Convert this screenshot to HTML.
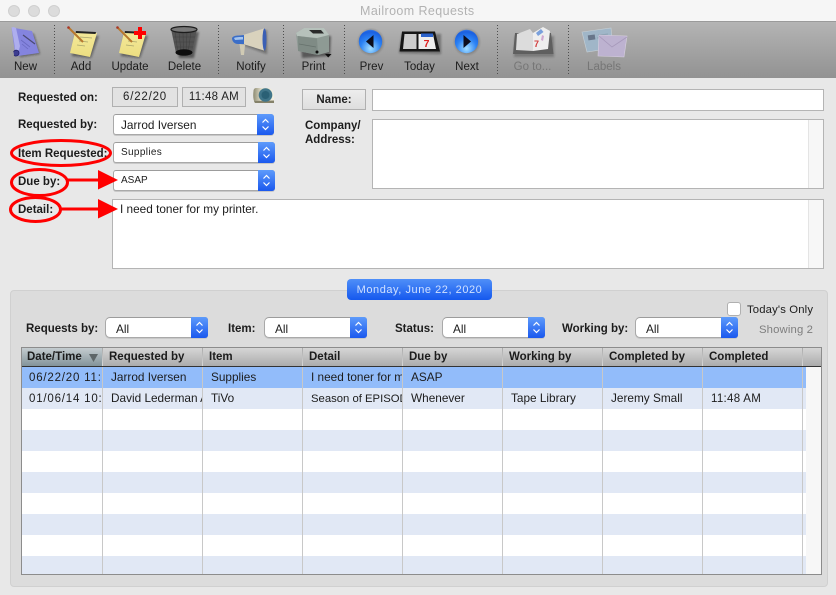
<!DOCTYPE html>
<html><head><meta charset="utf-8"><title>Mailroom Requests</title>
<style>
html,body{margin:0;padding:0}
body{width:836px;height:595px;overflow:hidden;position:relative;background:#e8e8e8;font-family:"Liberation Sans",Arial,sans-serif;font-size:11.8px;color:#1c1c1c}
div,span{position:absolute;box-sizing:border-box}
.t{white-space:nowrap;line-height:14px}
.b{font-weight:bold;font-size:11.5px}
.tl{transform:translateX(-50%);top:60px;font-size:11.5px}
.sel{background:#fff;border:1px solid #a9a9a9;border-top-color:#9c9c9c;border-radius:3px;height:21px;box-shadow:0 1px 0 #c8c8c8}
.sel i{position:absolute;top:-1px;right:-1px;bottom:-1px;width:17px;background:linear-gradient(#5e9bfb,#1a58ee);border-radius:0 3px 3px 0}
.sel svg{position:absolute;top:3px;left:4px}
.sel b{position:absolute;left:7px;top:3px;font-weight:normal;line-height:14px;white-space:nowrap}
.f b{left:10px;top:4px}
.box{background:#e2e2e2;border:1px solid #b0b0b0;text-align:center;line-height:19px;color:#222;font-size:11.5px}
.fld{background:#fff;border:1px solid #b4b4b4}
.sb{position:absolute;top:0;bottom:0;right:0;width:15px;background:#f7f7f7;border-left:1px solid #e4e4e4}
.h{position:absolute;top:348px;height:20px;font-weight:bold;font-size:11.5px;line-height:18px;white-space:nowrap}
.r{position:absolute;line-height:21px;white-space:nowrap;overflow:hidden;height:20px}
.d{font-size:11.5px;letter-spacing:.8px}
.v{position:absolute;width:1px;top:367px;height:207px;background:#c8c8c8}
.vh{position:absolute;width:1px;top:348px;height:18px;background:linear-gradient(#aaa,#d8d8d8)}
.stripe{position:absolute;left:22px;width:784px;height:21px;background:#e1e8f5}
</style></head><body>

<!-- title bar -->
<div style="left:0;top:0;width:836px;height:21px;background:#f6f6f6"></div>
<div style="left:8px;top:5px;width:12px;height:12px;border-radius:50%;background:#dcdcdc;border:1px solid #d0d0d0"></div>
<div style="left:28px;top:5px;width:12px;height:12px;border-radius:50%;background:#dcdcdc;border:1px solid #d0d0d0"></div>
<div style="left:48px;top:5px;width:12px;height:12px;border-radius:50%;background:#dcdcdc;border:1px solid #d0d0d0"></div>
<div class="t" style="left:360px;top:4px;font-size:12.5px;color:#b2b2b2;letter-spacing:.4px">Mailroom Requests</div>

<!-- toolbar -->
<div style="left:0;top:21px;width:836px;height:57px;background:linear-gradient(#b4b4b4,#929292);border-top:1px solid #9a9a9a"></div>

<svg width="836" height="595" style="position:absolute;left:0;top:0" xmlns="http://www.w3.org/2000/svg">
<defs>
<radialGradient id="bl" cx=".5" cy=".8" r=".85"><stop offset="0" stop-color="#a6e0ff"/><stop offset=".5" stop-color="#2d84f5"/><stop offset=".85" stop-color="#1a5fe0"/><stop offset="1" stop-color="#4a8ff0"/></radialGradient>
<linearGradient id="pad" x1="0" y1="0" x2="0" y2="1"><stop offset="0" stop-color="#f4e999"/><stop offset="1" stop-color="#ebdd80"/></linearGradient>
<linearGradient id="cam" x1="0" y1="0" x2="1" y2="0"><stop offset="0" stop-color="#8c8a72"/><stop offset=".4" stop-color="#e4e0cc"/><stop offset="1" stop-color="#f2eee0"/></linearGradient>
<filter id="s" x="-20%" y="-20%" width="150%" height="150%"><feGaussianBlur stdDeviation=".35"/></filter>
<filter id="sh" x="-30%" y="-30%" width="170%" height="170%"><feGaussianBlur stdDeviation="1.1"/></filter>
</defs>

<!-- separators -->
<g stroke="#4e4e4e" stroke-width="1" stroke-dasharray="1 2" fill="none">
<path d="M54.500 25V74M218.500 25V74M283.500 25V74M344.500 25V74M497.500 25V74M568.500 25V74"/>
</g>

<g filter="url(#s)">
<!-- New: book -->
<path d="M15 30 L34 34 L40 54 L20 57 Z" fill="#222" opacity=".5" filter="url(#sh)"/>
<path d="M11.500 27.500 L32 31 L39 53 L18 56 L15 53 Z" fill="#8484de"/>
<path d="M11.500 27.500 C13 27 14 27 16 28 L20 46 L19 50 L15 53 C15 44 13 36 11.500 27.500Z" fill="#aeaeee"/>
<path d="M13.500 52 C15 49 19 50 19 53 C19 56 15 57 14 55" fill="#3c3c90" stroke="#24246a" stroke-width=".8"/>
<path d="M23 35 L35 44" stroke="#4a4a70" stroke-width="1.200"/>
<path d="M21 40 L30 47M22 44 L28 49" stroke="#6a6ac0" stroke-width=".8"/>

<!-- Add pad -->
<path d="M75 35 L99 36 L91 58 L72 56Z" fill="#222" opacity=".5" filter="url(#sh)"/>
<path d="M75 32 L97 33 L90 57 L70 53Z" fill="url(#pad)"/>
<path d="M76 31 L96 32 L95.500 34 L75.500 33Z" fill="#222"/>
<path d="M80 37 L92 38M79 41 L88 42M77 45 L85 46" stroke="#a9a56e" stroke-width=".8"/>
<path d="M69 28 L83 42" stroke="#b8782e" stroke-width="2"/><circle cx="68.500" cy="27.500" r="1.300" fill="#a83628"/>

<!-- Update pad -->
<path d="M124 35 L148 36 L140 58 L121 56Z" fill="#222" opacity=".5" filter="url(#sh)"/>
<path d="M124 32 L146 33 L139 57 L119 53Z" fill="url(#pad)"/>
<path d="M125 31 L145 32 L144.500 34 L124.500 33Z" fill="#222"/>
<path d="M128 41 L137 42M126 45 L134 46" stroke="#a9a56e" stroke-width=".8"/>
<path d="M118 28 L132 42" stroke="#b8782e" stroke-width="2"/><circle cx="117.500" cy="27.500" r="1.300" fill="#a83628"/>
<path d="M138 27H142V31H146V35H142V39H138V35H134V31H138Z" fill="#f00"/>

<!-- Trash -->
<path d="M174 32 L199 32 L194 58 L179 58Z" fill="#111" opacity=".45" filter="url(#sh)"/>
<path d="M171 29 L197 29 L192 53 L176 53Z" fill="#525252"/>
<g stroke="#3c3c3c" stroke-width=".4"><path d="M175 32 L178 53M179 32 L181 53M183 32 L183.500 53M187 32 L186 53M191 32 L188 53"/><path d="M173 37H195M174 42H194M175 47H193"/></g>
<ellipse cx="184" cy="29.500" rx="13" ry="3" fill="#787878" stroke="#1c1c1c" stroke-width="1.200"/>
<ellipse cx="184" cy="52.500" rx="8.500" ry="3.200" fill="#0c0c0c"/>

<!-- Notify megaphone -->
<path d="M245 38 L267 30 L267 54 L245 46Z" fill="#222" opacity=".4" filter="url(#sh)"/>
<path d="M243 35 L264 28.500 L264 50.500 L243 44Z" fill="#d9d2bd"/>
<ellipse cx="264.500" cy="39.500" rx="2" ry="11" fill="#3a5fb4"/>
<path d="M232 38 C233 36 236 35.500 239 35.500 L244 35 L244 44 L238 44 C234 44 232 41 232 38Z" fill="#3b6ec8"/>
<path d="M234 38 C236 37 240 37 243 37 L243 39.500 L235 40Z" fill="#a4c4ee"/>
<path d="M239.500 44 L245 45 L244 55 L241 55Z" fill="#d0cab4"/>

<!-- Print -->
<path d="M300 34 L331 36 L330 56 L302 58Z" fill="#111" opacity=".45" filter="url(#sh)"/>
<path d="M296 33 L304 28 L324 28 L329 36 L329 52 L318 55 L298 51Z" fill="#8e9a94"/>
<path d="M296 33 L304 28 L324 28 L329 35 L317 38 L297 36Z" fill="#b6c1bb"/>
<path d="M309 30 L321 30 L324 33.500 L313 33.500Z" fill="#2a2a2a"/>
<path d="M298 36 L317 38.500 L318 55 L298 51Z" fill="#7f8b85"/>
<path d="M299 44 L316 47" stroke="#66716c" stroke-width=".8"/>
<circle cx="317" cy="52" r="1.500" fill="#111"/>
<path d="M325 54 H331.500 L328.200 57.500Z" fill="#111"/>

<!-- Prev -->
<circle cx="371" cy="42" r="12.500" fill="#333" opacity=".3" filter="url(#sh)"/>
<circle cx="370.500" cy="41.500" r="11.700" fill="url(#bl)"/>
<path d="M373.500 35 V48 L366 41.500Z" fill="#08101e"/>
<!-- Next -->
<circle cx="467" cy="42" r="12.500" fill="#333" opacity=".3" filter="url(#sh)"/>
<circle cx="466.500" cy="41.500" r="11.700" fill="url(#bl)"/>
<path d="M463.500 35 V48 L471 41.500Z" fill="#08101e"/>

<!-- Today -->
<path d="M402 34 L441 34 L441 54 L399 53Z" fill="#222" opacity=".4" filter="url(#sh)"/>
<path d="M402 31.500 L435 31.500 L440 51.500 L399.500 51.500Z" fill="#151515"/>
<path d="M404.500 34 H416.500 V49 H403Z" fill="#cdcdcd"/>
<path d="M418.500 34 H433 L436 49 H418.500Z" fill="#efefef"/>
<rect x="421" y="33.500" width="12" height="3.500" fill="#2a62cc"/>
<text x="426.500" y="47" font-family="Liberation Sans" font-size="10.500" font-weight="bold" fill="#e02020" text-anchor="middle">7</text>

<!-- Go to -->
<path d="M515 36 L554 36 L554 57 L514 57Z" fill="#333" opacity=".35" filter="url(#sh)"/>
<path d="M515 33 L551 33 L553.500 54 L513 54Z" fill="#5e5e5e"/>
<path d="M517 34 L530 29 L533 33 L533 51 L516 50Z" fill="#dcdcdc"/>
<path d="M533 33 L543 27 L550 31 L548 49 L533 51Z" fill="#eeeeee"/>
<path d="M536 33 L541 29 L543.500 32 L538 36Z" fill="#7aa0dc"/>
<path d="M542 35 L544 36 L543 41 L541 40Z" fill="#d0a8d0"/>
<text x="536.500" y="47" font-family="Liberation Sans" font-size="9" font-weight="bold" fill="#d23c3c" text-anchor="middle">7</text>

<!-- Labels -->
<path d="M582 32 L611 28 L613 48 L587 52Z" fill="#a0b6c8" stroke="#c6d0d6" stroke-width=".6"/>
<rect x="588" y="35" width="7" height="5" fill="#68768a" transform="rotate(-8 591 37)"/>
<path d="M598 35 L608 34M597 38 L609 37" stroke="#869cac" stroke-width=".8"/>
<path d="M599 35 L627 36 L624 57 L598 56Z" fill="#bdb2d0" stroke="#d8d0e0" stroke-width=".6"/>
<path d="M599 36 L612 47 L627 37" fill="none" stroke="#a698ba" stroke-width=".8"/>

<!-- Clock camera icon -->
<path d="M253.500 91 C253.500 89 255 88 256 88 L269 88 C272 89 274 92 274 96 L274 103 L255 103 C253 100 253 95 253.500 91Z" fill="url(#cam)"/>
<path d="M254 101 L274 100.500 L274 103 L255 103Z" fill="#85826a"/>
<circle cx="265.500" cy="95" r="6.800" fill="#3f7489"/>
<circle cx="265.500" cy="95" r="4" fill="#2c6074"/>
</g>
</svg>

<!-- toolbar labels -->
<div class="t tl" style="left:25.500px">New</div>
<div class="t tl" style="left:81px">Add</div>
<div class="t tl" style="left:130px">Update</div>
<div class="t tl" style="left:184.500px">Delete</div>
<div class="t tl" style="left:251px">Notify</div>
<div class="t tl" style="left:313.500px">Print</div>
<div class="t tl" style="left:371.500px">Prev</div>
<div class="t tl" style="left:419.500px">Today</div>
<div class="t tl" style="left:467px">Next</div>
<div class="t tl" style="left:532.500px;color:#767676">Go to...</div>
<div class="t tl" style="left:604px;color:#767676">Labels</div>

<!-- form left -->
<div class="t b" style="left:18px;top:91px">Requested on:</div>
<div class="box" style="left:112px;top:87px;width:66px;height:20px;letter-spacing:.8px">6/22/20</div>
<div class="box" style="left:182px;top:87px;width:64px;height:20px;letter-spacing:.3px">11:48 AM</div>
<div class="t b" style="left:18px;top:118px">Requested by:</div>
<div class="sel" style="left:113px;top:114px;width:161px"><b>Jarrod Iversen</b><i><svg width="9" height="15" viewBox="0 0 9 15"><path d="M1.500 5.500 L4.500 2.500 L7.500 5.500M1.500 9.500 L4.500 12.500 L7.500 9.500" fill="none" stroke="#fff" stroke-width="1.200"/></svg></i></div>
<div class="t b" style="left:18px;top:147px">Item Requested:</div>
<div class="sel" style="left:113px;top:142px;width:162px"><b style="font-size:10px;letter-spacing:.35px;top:3px">Supplies</b><i><svg width="9" height="15" viewBox="0 0 9 15"><path d="M1.500 5.500 L4.500 2.500 L7.500 5.500M1.500 9.500 L4.500 12.500 L7.500 9.500" fill="none" stroke="#fff" stroke-width="1.200"/></svg></i></div>
<div class="t b" style="left:18px;top:175px">Due by:</div>
<div class="sel" style="left:113px;top:170px;width:162px"><b style="font-size:10px;top:3px">ASAP</b><i><svg width="9" height="15" viewBox="0 0 9 15"><path d="M1.500 5.500 L4.500 2.500 L7.500 5.500M1.500 9.500 L4.500 12.500 L7.500 9.500" fill="none" stroke="#fff" stroke-width="1.200"/></svg></i></div>
<div class="t b" style="left:18px;top:203px">Detail:</div>
<div class="fld" style="left:112px;top:199px;width:712px;height:70px"><span class="sb"></span><span class="t" style="left:7px;top:2px">I need toner for my printer.</span></div>

<!-- form right -->
<div class="box b" style="left:302px;top:89px;width:64px;height:21px;line-height:20px;background:linear-gradient(#ededed,#dedede)">Name:</div>
<div class="fld" style="left:372px;top:89px;width:452px;height:22px"></div>
<div class="t b" style="left:305px;top:119px">Company/</div>
<div class="t b" style="left:305px;top:133px">Address:</div>
<div class="fld" style="left:372px;top:119px;width:452px;height:70px"><span class="sb"></span></div>

<!-- annotation -->
<svg width="836" height="595" style="position:absolute;left:0;top:0;z-index:5" xmlns="http://www.w3.org/2000/svg">
<g fill="none" stroke="#f00" stroke-width="3">
<ellipse cx="61" cy="153" rx="49.500" ry="12.500"/>
<ellipse cx="39.500" cy="182.500" rx="28" ry="13"/>
<ellipse cx="35.500" cy="209.500" rx="25" ry="12"/>
</g>
<path d="M68 178.500H98V170L118 180L98 189.500V181.500H68Z" fill="#f00"/>
<path d="M61 207.500H98V199L118 209L98 218.500V210.500H61Z" fill="#f00"/>
</svg>

<!-- panel -->
<div style="left:10px;top:290px;width:818px;height:297px;background:#dcdcdc;border:1px solid #d0d0d0;border-radius:4px"></div>
<div style="left:347px;top:279px;width:145px;height:21px;border-radius:4px;background:linear-gradient(#4f8ff8,#1558ee);color:#cfe0ff;text-align:center;line-height:22px;font-size:11px;letter-spacing:.55px">Monday, June 22, 2020</div>

<div style="left:727px;top:302px;width:14px;height:14px;background:#fff;border:1px solid #b0b0b0;border-radius:3px"></div>
<div class="t" style="left:747px;top:303px;font-size:11.300px;letter-spacing:.15px">Today's Only</div>
<div class="t" style="left:759px;top:323px;color:#7e7e7e;font-size:11.300px;letter-spacing:.15px">Showing 2</div>

<div class="t b" style="left:26px;top:322px">Requests by:</div>
<div class="sel f" style="left:105px;top:317px;width:103px;border-radius:5px 3px 3px 5px"><b>All</b><i><svg width="9" height="15" viewBox="0 0 9 15"><path d="M1.500 5.500 L4.500 2.500 L7.500 5.500M1.500 9.500 L4.500 12.500 L7.500 9.500" fill="none" stroke="#fff" stroke-width="1.200"/></svg></i></div>
<div class="t b" style="left:228px;top:322px">Item:</div>
<div class="sel f" style="left:264px;top:317px;width:103px;border-radius:5px 3px 3px 5px"><b>All</b><i><svg width="9" height="15" viewBox="0 0 9 15"><path d="M1.500 5.500 L4.500 2.500 L7.500 5.500M1.500 9.500 L4.500 12.500 L7.500 9.500" fill="none" stroke="#fff" stroke-width="1.200"/></svg></i></div>
<div class="t b" style="left:395px;top:322px">Status:</div>
<div class="sel f" style="left:442px;top:317px;width:103px;border-radius:5px 3px 3px 5px"><b>All</b><i><svg width="9" height="15" viewBox="0 0 9 15"><path d="M1.500 5.500 L4.500 2.500 L7.500 5.500M1.500 9.500 L4.500 12.500 L7.500 9.500" fill="none" stroke="#fff" stroke-width="1.200"/></svg></i></div>
<div class="t b" style="left:562px;top:322px">Working by:</div>
<div class="sel f" style="left:635px;top:317px;width:103px;border-radius:5px 3px 3px 5px"><b>All</b><i><svg width="9" height="15" viewBox="0 0 9 15"><path d="M1.500 5.500 L4.500 2.500 L7.500 5.500M1.500 9.500 L4.500 12.500 L7.500 9.500" fill="none" stroke="#fff" stroke-width="1.200"/></svg></i></div>

<!-- table -->
<div style="left:21px;top:347px;width:801px;height:228px;background:#fff"></div>
<div style="left:22px;top:348px;width:799px;height:19px;background:linear-gradient(#d6d6d6,#a9a9a9)"></div>
<div style="left:22px;top:348px;width:81px;height:19px;background:linear-gradient(#c4cccf,#7f9096)"></div>
<div style="left:22px;top:366px;width:799px;height:1px;background:#333"></div>
<div style="left:806px;top:367px;width:15px;height:207px;background:#f7f7f7"></div>
<div style="left:22px;top:367px;width:784px;height:21px;background:#92bcfa"></div>
<div class="stripe" style="top:388px"></div>
<div class="stripe" style="top:430px"></div>
<div class="stripe" style="top:472px"></div>
<div class="stripe" style="top:514px"></div>
<div class="stripe" style="top:556px;height:18px"></div>
<div class="v" style="left:102px"></div><div class="v" style="left:202px"></div><div class="v" style="left:302px"></div><div class="v" style="left:402px"></div><div class="v" style="left:502px"></div><div class="v" style="left:602px"></div><div class="v" style="left:702px"></div><div class="v" style="left:802px"></div>
<div class="vh" style="left:102px"></div><div class="vh" style="left:202px"></div><div class="vh" style="left:302px"></div><div class="vh" style="left:402px"></div><div class="vh" style="left:502px"></div><div class="vh" style="left:602px"></div><div class="vh" style="left:702px"></div><div class="vh" style="left:802px"></div>
<div style="left:21px;top:347px;width:801px;height:228px;border:1px solid #8c8c8c"></div>

<div class="h" style="left:27px">Date/Time</div>
<svg width="9" height="8" style="position:absolute;left:89px;top:354px"><path d="M0 0H9L4.500 8Z" fill="#5e6668"/></svg>
<div class="h" style="left:109px">Requested by</div>
<div class="h" style="left:209px">Item</div>
<div class="h" style="left:309px">Detail</div>
<div class="h" style="left:409px">Due by</div>
<div class="h" style="left:509px">Working by</div>
<div class="h" style="left:609px">Completed by</div>
<div class="h" style="left:709px">Completed</div>

<div class="r d" style="left:29px;top:368px;width:73px">06/22/20 11:48 AM</div>
<div class="r" style="left:111px;top:367px;width:91px">Jarrod Iversen</div>
<div class="r" style="left:211px;top:367px;width:91px">Supplies</div>
<div class="r" style="left:311px;top:367px;width:91px">I need toner for my printer.</div>
<div class="r" style="left:411px;top:367px;width:91px">ASAP</div>

<div class="r d" style="left:29px;top:389px;width:72px">01/06/14 10:22 AM</div>
<div class="r" style="left:111px;top:388px;width:91px">David Lederman Assistant</div>
<div class="r" style="left:211px;top:388px;width:91px">TiVo</div>
<div class="r" style="left:311px;top:389px;width:91px;font-size:11.300px">Season of EPISODES</div>
<div class="r" style="left:411px;top:388px;width:91px">Whenever</div>
<div class="r" style="left:511px;top:388px;width:91px">Tape Library</div>
<div class="r" style="left:611px;top:388px;width:91px">Jeremy Small</div>
<div class="r" style="left:711px;top:389px;width:91px;font-size:11.500px;letter-spacing:.3px">11:48 AM</div>

</body></html>
